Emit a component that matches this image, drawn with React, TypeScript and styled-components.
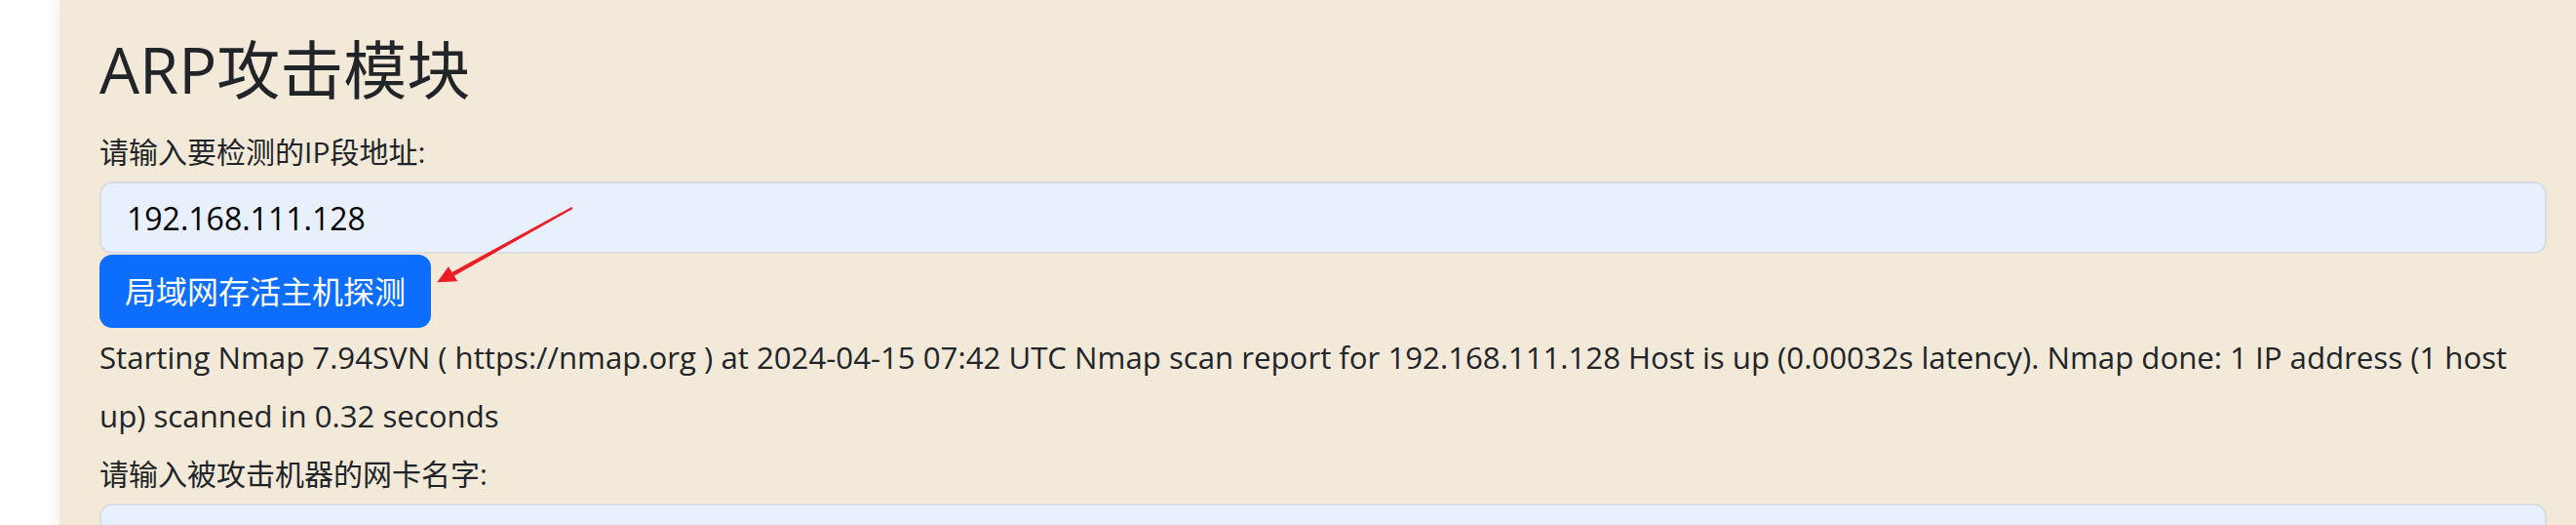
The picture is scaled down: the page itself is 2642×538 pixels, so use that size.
import styled, { createGlobalStyle } from 'styled-components';

const scanOutput =
  'Starting Nmap 7.94SVN ( https://nmap.org ) at 2024-04-15 07:42 UTC Nmap scan report for 192.168.111.128 Host is up (0.00032s latency). Nmap done: 1 IP address (1 host up) scanned in 0.32 seconds';

export default function App() {
  return (
    <Page>
      <GlobalStyle />
      <Panel>
        <Title>ARP攻击模块</Title>

        <Label htmlFor="ip-range">请输入要检测的IP段地址:</Label>
        <Input id="ip-range" defaultValue="192.168.111.128" />
        <Button type="button">局域网存活主机探测</Button>

        <Output>{scanOutput}</Output>

        <Label htmlFor="iface">请输入被攻击机器的网卡名字:</Label>
        <Input id="iface" defaultValue="" />
      </Panel>

      {/* red annotation arrow pointing at the scan button */}
      <Arrow viewBox="0 0 160 95" width="160" height="95">
        <polygon points="147.5,8.9 146.5,7.1 23.6,73.9 25.7,77.7" fill="#ec1c24" />
        <polygon points="8.3,84.3 20,68.3 29.3,83.3" fill="#ec1c24" />
      </Arrow>
    </Page>
  );
}

const GlobalStyle = createGlobalStyle`
  html, body {
    margin: 0;
    padding: 0;
    background: #ffffff;
    overflow: hidden;
  }

  * {
    box-sizing: border-box;
  }
`;

const Page = styled.div`
  position: relative;
  height: 538px;
  overflow: hidden;
  padding-left: 61px;
  font-family: 'Open Sans', 'Noto Sans CJK SC', sans-serif;
  color: #212529;
`;

const Panel = styled.main`
  min-height: 100%;
  background: #f3e9d8;
  box-shadow: 0 0 18px rgba(0, 0, 0, 0.09);
  padding: 33px 30px 0 41px;
`;

const Title = styled.h1`
  margin: 0 0 17px;
  font-size: 65px;
  font-weight: 400;
  line-height: 76px;
`;

const Label = styled.label`
  display: block;
  font-size: 30px;
  line-height: 60px;
`;

const Input = styled.input`
  display: block;
  width: 100%;
  height: 74px;
  padding: 0 26px;
  font-family: inherit;
  font-size: 32px;
  color: #000000;
  background: #e8f0fe;
  border: 2px solid #dadde2;
  border-radius: 13px;
  outline: none;
`;

const Button = styled.button`
  display: block;
  height: 75px;
  margin-top: 1px;
  padding: 0 26px;
  font-family: inherit;
  font-size: 32px;
  line-height: 1;
  color: #ffffff;
  background: #0d6efd;
  border: none;
  border-radius: 13px;
  cursor: pointer;
`;

const Output = styled.p`
  margin: 0;
  font-size: 31.2px;
  line-height: 60px;
`;

const Arrow = styled.svg`
  position: absolute;
  left: 440px;
  top: 205px;
`;
